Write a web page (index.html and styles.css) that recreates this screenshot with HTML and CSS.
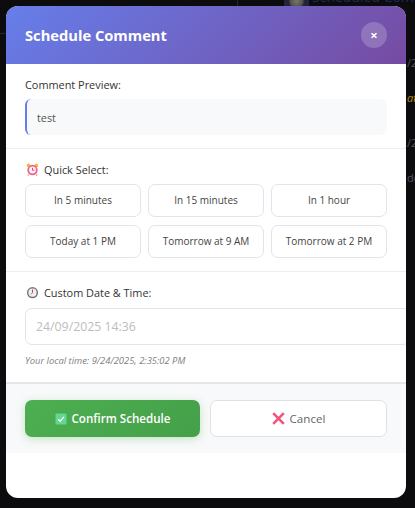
FILE: index.html
```html
<!DOCTYPE html>
<html lang="en">
<head>
    <meta charset="UTF-8">
    <meta name="viewport" content="width=device-width, initial-scale=1.0">
    <title>Schedule Comment</title>
    <link rel="stylesheet" href="styles.css">
</head>
<body>
    <!-- page behind the modal, mostly hidden -->
    <div class="backdrop">
        <div class="bg-thumb"></div>
        <div class="bg-title">Scheduled Comment</div>
        <div class="bg-line bg-line-h"></div>
        <div class="bg-line bg-line-v"></div>
        <div class="bg-date bg-date-1">/2</div>
        <div class="bg-gold">at</div>
        <div class="bg-date bg-date-2">/2</div>
        <div class="bg-date bg-date-3">de</div>
    </div>

    <div class="modal">
        <header class="modal-header">
            <h1>Schedule Comment</h1>
            <button class="close-btn">×</button>
        </header>

        <section class="section">
            <label class="label">Comment Preview:</label>
            <div class="preview">test</div>
        </section>

        <section class="section section-quick">
            <label class="label">
                <svg class="icon" viewBox="0 0 14 14">
                    <circle cx="2.8" cy="2.6" r="2" fill="#f5b942"/>
                    <circle cx="11.2" cy="2.6" r="2" fill="#f5b942"/>
                    <path d="M3 12.2 2 13.6M11 12.2 12 13.6" stroke="#c79bb0" stroke-width="1.2"/>
                    <circle cx="7" cy="7.6" r="5.6" fill="#ee5f8b"/>
                    <circle cx="7" cy="7.6" r="3.7" fill="#fdf1f5"/>
                    <path d="M7 5.2V7.8H9" fill="none" stroke="#d2406e" stroke-width="1"/>
                </svg>
                Quick Select:
            </label>
            <div class="quick-grid">
                <button class="quick-btn">In 5 minutes</button>
                <button class="quick-btn">In 15 minutes</button>
                <button class="quick-btn">In 1 hour</button>
                <button class="quick-btn">Today at 1 PM</button>
                <button class="quick-btn">Tomorrow at 9 AM</button>
                <button class="quick-btn">Tomorrow at 2 PM</button>
            </div>
        </section>

        <section class="section section-custom">
            <label class="label">
                <svg class="icon" viewBox="0 0 14 14">
                    <circle cx="7" cy="7.2" r="6" fill="#77757c"/>
                    <circle cx="7" cy="7.2" r="4.4" fill="#f1eeee"/>
                    <path d="M7 7.2V3.8" stroke="#c9455f" stroke-width="1.1"/>
                    <path d="M7 7.2 5.4 9" stroke="#77757c" stroke-width="1"/>
                </svg>
                Custom Date &amp; Time:
            </label>
            <div class="date-input">24/09/2025 14:36</div>
            <p class="hint">Your local time: 9/24/2025, 2:35:02 PM</p>
        </section>

        <footer class="modal-footer">
            <button class="btn btn-confirm">
                <svg class="btn-icon" viewBox="0 0 12 12">
                    <rect x="0.5" y="0.5" width="11" height="11" rx="1" fill="#63d692"/>
                    <path d="M3 6.2 5.1 8.2 9 3.9" fill="none" stroke="#fff" stroke-width="1.3"/>
                </svg>
                Confirm Schedule
            </button>
            <button class="btn btn-cancel">
                <svg class="btn-icon btn-icon-x" viewBox="0 0 13 13">
                    <path d="M1.2 1.2 11.8 11.8M11.8 1.2 1.2 11.8" stroke="#f4547c" stroke-width="2.6"/>
                </svg>
                Cancel
            </button>
        </footer>
    </div>
</body>
</html>
```

FILE: styles.css
```css
* {
    box-sizing: border-box;
}
html, body {
    height: 100%;
}
body {
    margin: 0;
    padding: 6px 9px 10px 6px;
    background-color: #0c0c0e;
    font-family: "Open Sans", "Noto Sans", sans-serif;
    overflow: hidden;
    position: relative;
}
.backdrop {
    position: absolute;
    inset: 0;
    overflow: hidden;
}
.bg-thumb {
    position: absolute;
    left: 284px;
    top: -8px;
    width: 25px;
    height: 20px;
    border-radius: 4px;
    background: radial-gradient(circle at 50% 45%, #77756a 0, #55534f 6px, #23233a 8px);
}
.bg-title {
    position: absolute;
    left: 312px;
    top: -13px;
    font-size: 14px;
    color: #1f2a55;
    white-space: nowrap;
}
.bg-line {
    position: absolute;
    background-color: #26262a;
}
.bg-line-h {
    left: 0;
    top: 33px;
    width: 6px;
    height: 1px;
}
.bg-line-v {
    left: 237px;
    top: 0;
    width: 1px;
    height: 6px;
}
.bg-date {
    position: absolute;
    left: 407px;
    font-size: 11px;
    color: #55555a;
}
.bg-date-1 {
    top: 55px;
}
.bg-date-2 {
    top: 135px;
}
.bg-date-3 {
    top: 170px;
}
.bg-gold {
    position: absolute;
    left: 407px;
    top: 90px;
    font-size: 11px;
    font-style: italic;
    color: #c08a1c;
}
.modal {
    position: relative;
    width: 400px;
    height: 492px;
    background-color: #fff;
    border-radius: 12px;
    overflow: hidden;
}
.modal-header {
    height: 58px;
    padding: 0 19px;
    display: flex;
    align-items: center;
    justify-content: space-between;
    color: #fff;
    background: linear-gradient(135deg, #667eea 0%, #764ba2 100%);
}
.modal-header h1 {
    margin: 0;
    font-size: 14.7px;
    font-weight: 700;
}
.close-btn {
    width: 26px;
    height: 26px;
    padding: 0;
    border: none;
    border-radius: 50%;
    background-color: rgba(255, 255, 255, 0.2);
    color: #fff;
    font-family: inherit;
    font-size: 13px;
    font-weight: 700;
    line-height: 26px;
}
.section {
    padding: 13px 19px 12.5px;
    border-bottom: 1px solid #eceef0;
}
.label {
    display: flex;
    align-items: center;
    gap: 5px;
    margin-bottom: 6px;
    font-size: 10.9px;
    font-weight: 500;
    line-height: 16px;
    color: #333;
}
.icon {
    width: 13px;
    height: 13px;
    margin-left: 1px;
}
.preview {
    height: 36px;
    padding: 0 10px;
    display: flex;
    align-items: center;
    background-color: #f8f9fa;
    border-left: 2px solid #667eea;
    border-radius: 6px;
    font-size: 10.8px;
    color: #555;
}
.quick-grid {
    display: grid;
    grid-template-columns: repeat(3, 116px);
    gap: 7.5px 7px;
}
.quick-btn {
    height: 33.5px;
    padding: 0;
    background-color: #fff;
    border: 1px solid #e1e4e8;
    border-radius: 7px;
    font-family: inherit;
    font-size: 10px;
    color: #444;
}
.date-input {
    width: 385px;
    height: 37.5px;
    padding: 0 10px;
    display: flex;
    align-items: center;
    border: 1px solid #e1e4e8;
    border-radius: 7px;
    font-size: 12.3px;
    color: #bdbdbd;
}
.hint {
    margin: 9px 0 0;
    font-size: 9.4px;
    font-style: italic;
    color: #808080;
}
.section-custom {
    padding-bottom: 15px;
    border-bottom: 2px solid #e4e6ea;
}
.section-custom .label {
    margin-bottom: 7px;
}
.modal-footer {
    padding: 16px 19px;
    display: flex;
    gap: 10px;
    background-color: #f8f9fa;
}
.btn {
    height: 37px;
    display: flex;
    align-items: center;
    justify-content: center;
    gap: 5px;
    padding: 0;
    border-radius: 7px;
    font-family: inherit;
    font-size: 11.6px;
}
.btn-confirm {
    width: 175px;
    border: none;
    color: #fff;
    font-weight: 600;
    background: linear-gradient(135deg, #4caf50 0%, #45a049 100%);
    box-shadow: 0 2px 8px rgba(76, 175, 80, 0.3);
}
.btn-cancel {
    width: 177px;
    background-color: #fff;
    border: 1px solid #dfe1e6;
    color: #666;
    font-weight: 500;
}
.btn-icon {
    width: 12px;
    height: 12px;
}
.btn-icon-x {
    width: 13px;
    height: 13px;
}
```
